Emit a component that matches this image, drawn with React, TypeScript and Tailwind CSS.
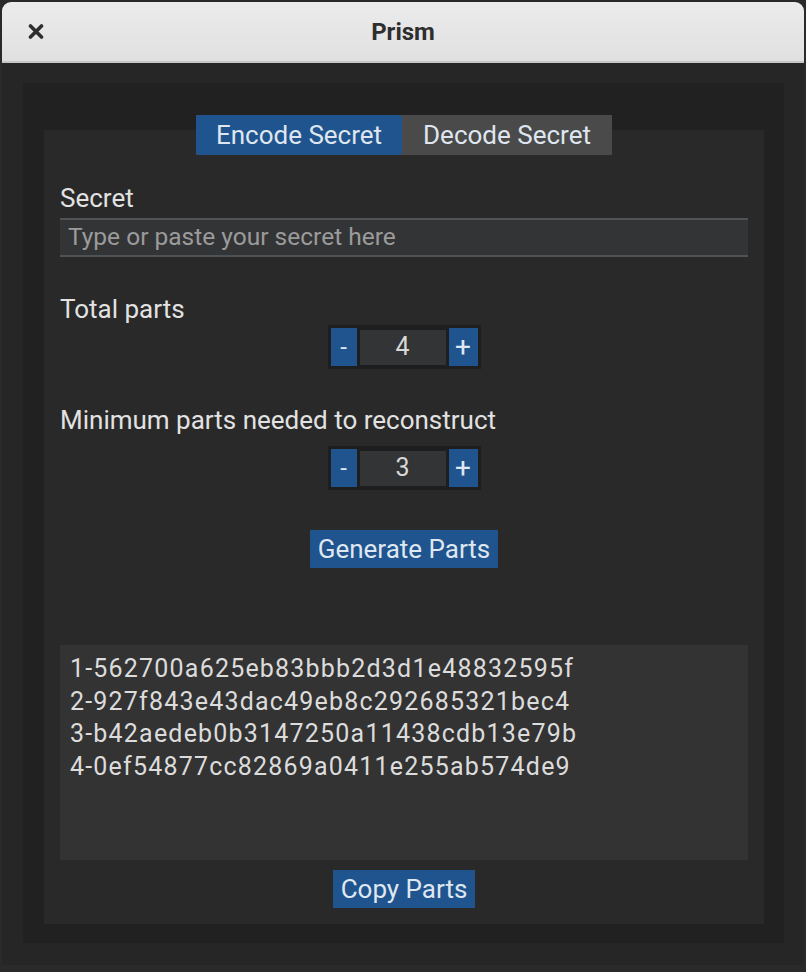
import React from 'react';

const parts = [
    '1-562700a625eb83bbb2d3d1e48832595f',
    '2-927f843e43dac49eb8c292685321bec4',
    '3-b42aedeb0b3147250a11438cdb13e79b',
    '4-0ef54877cc82869a0411e255ab574de9',
];

const Stepper = ({ value }: { value: number }) => (
    <div className="flex items-center gap-[3px] bg-[#1e1e1e] p-[3px] h-[44px]">
        <button className="w-[26px] h-[38px] bg-[#20548e] text-[#dfe7f1] text-[24px] leading-none">-</button>
        <div className="w-[86px] h-[35px] bg-[#333436] flex items-center justify-center text-[25px] text-[#d8d8d8]">
            {value}
        </div>
        <button className="w-[29px] h-[38px] bg-[#20548e] text-[#dfe7f1] text-[28px] leading-none">+</button>
    </div>
);

const Label = ({ children }: { children: React.ReactNode }) => (
    <div className="h-[28px] leading-[28px] text-[26px] text-[#e2e2e2]">{children}</div>
);

export default function App() {
    return (
        <div className="w-[806px] h-[972px] bg-[#2a2a2a] pt-[2px] px-[2px]" style={{ fontFamily: 'Roboto, "Liberation Sans", sans-serif' }}>
            <div className="flex flex-col rounded-t-[9px] overflow-hidden">
                {/* Title bar */}
                <div className="relative h-[61px] bg-gradient-to-b from-[#ececec] to-[#e0e0e0] border-b-[2px] border-[#c6c6c6] flex items-center justify-center">
                    <svg className="absolute left-[26px] top-[22px]" width="16" height="15" viewBox="0 0 16 15">
                        <path d="M2.5 2 L13.5 13 M13.5 2 L2.5 13" stroke="#2e2e2e" strokeWidth="3.6" strokeLinecap="round" />
                    </svg>
                    <span className="text-[24px] font-bold text-[#2e2e2e]">Prism</span>
                </div>

                {/* Body */}
                <div className="bg-[#262626] pl-[21px] pr-[20px] pt-[20px] pb-[22px]">
                    <div className="bg-[#212121] pl-[21px] pr-[20px] pt-[47px] pb-[19px]">
                        <div className="bg-[#292929] px-[16px] pb-[16px] flex flex-col">
                            {/* Tabs */}
                            <div className="-mt-[15px] flex justify-center">
                                <div className="flex h-[40px] bg-[#4a4a4a] text-[26px] text-[#dfe6ef]">
                                    <div className="w-[206px] rounded-[3px] bg-[#20548e] flex items-center justify-center">Encode Secret</div>
                                    <div className="w-[210px] flex items-center justify-center">Decode Secret</div>
                                </div>
                            </div>

                            <div className="mt-[29px]"><Label>Secret</Label></div>
                            <div className="mt-[6px] h-[39px] bg-[#333436] border-y-[2px] border-[#4f5356] flex items-center px-[8px] text-[24.5px] text-[#9b9b9b]">
                                Type or paste your secret here
                            </div>

                            <div className="mt-[38px]"><Label>Total parts</Label></div>
                            <div className="mt-[2px] flex justify-center"><Stepper value={4} /></div>

                            <div className="mt-[37px]"><Label>Minimum parts needed to reconstruct</Label></div>
                            <div className="mt-[12px] flex justify-center"><Stepper value={3} /></div>

                            <div className="mt-[40px] flex justify-center">
                                <button className="h-[38px] px-[8px] bg-[#20548e] text-[26px] text-[#dfe7f1]">Generate Parts</button>
                            </div>

                            <div className="mt-[77px] h-[215px] bg-[#333333] px-[10px] pt-[8px] text-[25px] tracking-[1.2px] text-[#dcdcdc] leading-[32.5px]">
                                {parts.map((p) => (
                                    <div key={p}>{p}</div>
                                ))}
                            </div>

                            <div className="mt-[10px] flex justify-center">
                                <button className="h-[38px] px-[8px] bg-[#20548e] text-[26px] text-[#dfe7f1]">Copy Parts</button>
                            </div>
                        </div>
                    </div>
                </div>
            </div>
        </div>
    );
}
